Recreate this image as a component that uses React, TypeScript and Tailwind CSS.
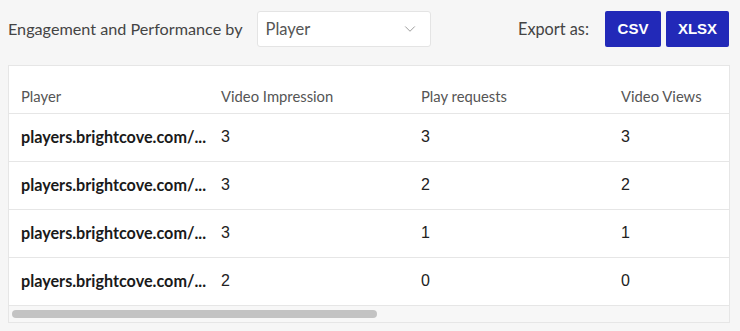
import { ChevronDown } from 'lucide-react';

const rows = [
  { player: 'players.brightcove.com/...', impressions: 3, requests: 3, views: 3 },
  { player: 'players.brightcove.com/...', impressions: 3, requests: 2, views: 2 },
  { player: 'players.brightcove.com/...', impressions: 3, requests: 1, views: 1 },
  { player: 'players.brightcove.com/...', impressions: 2, requests: 0, views: 0 },
];

const headers = ['Player', 'Video Impression', 'Play requests', 'Video Views'];

export default function App() {
  return (
    <div className="h-[331px] w-[740px] bg-[#f6f6f6] font-['Lato',sans-serif]">
      <div className="flex h-[58px] items-center pl-2 pr-[11px]">
        <span className="text-[16.2px] text-[#444]">Engagement and Performance by</span>
        <div className="ml-[14px] flex h-[36px] w-[174px] items-center justify-between rounded-[3px] border border-[#e4e4e4] bg-white pl-[8px] pr-[11px]">
          <span className="text-[16.5px] text-[#555]">Player</span>
          <ChevronDown className="h-[18px] w-[18px] text-[#999]" strokeWidth={1.3} />
        </div>
        <span className="ml-auto text-[16.3px] text-[#444]">Export as:</span>
        <button className="ml-[16px] h-[36px] w-[56px] rounded-[2px] bg-[#2229b8] font-['Liberation_Sans',sans-serif] text-[15px] font-bold text-white">
          CSV
        </button>
        <button className="ml-[5px] h-[36px] w-[63px] rounded-[2px] bg-[#2229b8] font-['Liberation_Sans',sans-serif] text-[15px] font-bold text-white">
          XLSX
        </button>
      </div>
      <div className="mx-2 mt-[7px] w-[722px] overflow-hidden border border-[#e6e6e6] bg-white">
        <table className="w-[800px] table-fixed border-collapse">
          <thead>
            <tr className="h-[47px] border-b border-[#e6e6e6]">
              {headers.map((h) => (
                <th
                  key={h}
                  className="w-[200px] whitespace-nowrap px-3 pt-[14px] text-left align-middle text-[14.8px] font-normal text-[#555]"
                >
                  {h}
                </th>
              ))}
            </tr>
          </thead>
          <tbody>
            {rows.map((r, i) => (
              <tr key={i} className="h-[48px] border-b border-[#e6e6e6]">
                <td className="overflow-hidden whitespace-nowrap px-3 text-[16.2px] font-bold text-[#1a1a1a]">{r.player}</td>
                <td className="px-3 font-['Liberation_Sans',sans-serif] text-[16px] text-[#222]">{r.impressions}</td>
                <td className="px-3 font-['Liberation_Sans',sans-serif] text-[16px] text-[#222]">{r.requests}</td>
                <td className="px-3 font-['Liberation_Sans',sans-serif] text-[16px] text-[#222]">{r.views}</td>
              </tr>
            ))}
          </tbody>
        </table>
        <div className="flex h-[16px] items-center bg-[#f7f7f7] px-[3px]">
          <div className="h-[8px] w-[365px] rounded-full bg-[#c3c3c3]" />
        </div>
      </div>
    </div>
  );
}
